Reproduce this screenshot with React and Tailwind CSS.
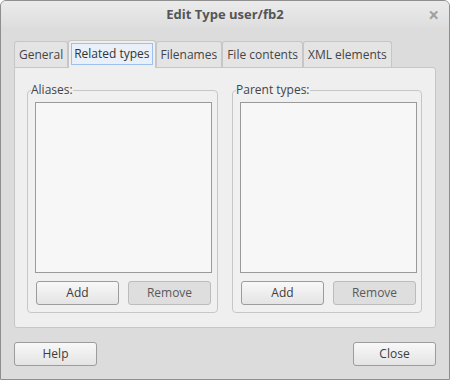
const FONT = { fontFamily: '"Open Sans", "Noto Sans", sans-serif' };

function Button({ children, disabled = false, className = '' }) {
  return (
    <div
      className={`h-[24px] w-[83px] shrink-0 rounded-[3px] border flex items-center justify-center text-[12px] ${
        disabled
          ? 'border-[#bcbcbc] bg-[#dedede] text-[#5a5a5a]'
          : 'border-[#9c9c9c] bg-gradient-to-b from-[#f8f8f8] to-[#e4e4e4] text-[#3c3c3c]'
      } ${className}`}
    >
      {children}
    </div>
  );
}

function Group({ label, className = '' }) {
  return (
    <fieldset className={`min-w-0 border border-[#c6c6c6] rounded-[4px] bg-[#f0f0f0] pl-[7px] pb-[7px] pt-[5px] flex flex-col ${className}`}>
      <legend className="text-[12px] text-[#444] leading-[14px] -ml-[4px] px-0">{label}</legend>
      <div className="h-[171px] w-[177px] bg-[#f7f7f7] border border-[#9a9a9a]" />
      <div className="flex gap-[9px] mt-[8px] pl-px">
        <Button>Add</Button>
        <Button disabled>Remove</Button>
      </div>
    </fieldset>
  );
}

const TABS = ['General', 'Related types', 'Filenames', 'File contents', 'XML elements'];

export default function App() {
  return (
    <div className="w-[450px] h-[380px] bg-[#dcdcdc] border border-[#8e8e8e] rounded-t-[6px] overflow-hidden flex flex-col" style={FONT}>
      <div className="h-[26px] shrink-0 bg-gradient-to-b from-[#ebebeb] to-[#dedede] relative flex items-center justify-center">
        <span className="text-[13px] font-bold text-[#555] mt-[2px]">Edit Type user/fb2</span>
        <span className="absolute right-[10px] top-[2px] text-[19px] leading-[24px] font-bold text-[#a0a0a0]">×</span>
      </div>
      <div className="flex-1 px-[13px] pt-[12px] flex flex-col">
        <div className="flex items-end h-[28px] relative z-10">
          {TABS.map((t, i) =>
            i === 1 ? (
              <div key={t} className="h-[28px] border border-b-0 border-[#c6c6c6] rounded-t-[3px] bg-[#efefef] px-[2px] pt-[2px] -mb-px pb-[3px]">
                <div className="h-[22px] px-[2px] border border-[#9fc0ef] bg-[#eaf0fa] flex items-center text-[12px] text-[#333]">{t}</div>
              </div>
            ) : (
              <div key={t} className="h-[26px] border border-b-0 border-[#c6c6c6] rounded-t-[3px] bg-[#e4e4e4] px-[4px] flex items-center text-[12px] text-[#444]">{t}</div>
            )
          )}
        </div>
        <div className="h-[261px] border border-[#c6c6c6] rounded-b-[3px] rounded-tr-[3px] bg-[#efefef] pl-[12px] pt-[15px] pb-[14px] flex gap-[14px]">
          <Group label="Aliases:" className="w-[191px]" />
          <Group label="Parent types:" className="w-[190px]" />
        </div>
        <div className="flex justify-between mt-[14px]">
          <Button>Help</Button>
          <Button>Close</Button>
        </div>
      </div>
    </div>
  );
}
